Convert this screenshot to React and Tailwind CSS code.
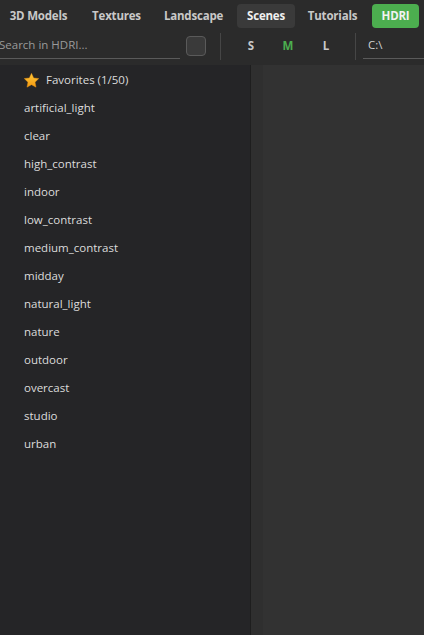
import React from "react";

const tabs = [
  { t: "3D Models", w: "w-[71px]", ml: "ml-[3px]" },
  { t: "Textures", w: "w-[61px]", ml: "ml-[12px]" },
  { t: "Landscape", w: "w-[69px]", ml: "ml-[12px]" },
  { t: "Scenes", w: "w-[58px]", ml: "ml-[9px]", active: true },
  { t: "Tutorials", w: "w-[59px]", ml: "ml-[8px]" },
];
const items = [
  "artificial_light",
  "clear",
  "high_contrast",
  "indoor",
  "low_contrast",
  "medium_contrast",
  "midday",
  "natural_light",
  "nature",
  "outdoor",
  "overcast",
  "studio",
  "urban",
];

function Star() {
  return (
    <svg width="17" height="17" viewBox="0 0 24 24">
      <defs>
        <linearGradient id="sg" x1="0" y1="0" x2="0" y2="1">
          <stop offset="0" stopColor="#ffc83a" />
          <stop offset="1" stopColor="#f39a12" />
        </linearGradient>
      </defs>
      <path
        d="M12 1.8l3.1 6.6 7.2.9-5.3 5 1.4 7.1L12 17.9l-6.4 3.5 1.4-7.1-5.3-5 7.2-.9z"
        fill="url(#sg)"
        stroke="#e8900e"
        strokeWidth="0.6"
        strokeLinejoin="round"
      />
    </svg>
  );
}

export default function App() {
  return (
    <div
      className="w-[424px] h-[635px] flex flex-col bg-[#2b2b2b] text-[#dcdcdc] overflow-hidden"
      style={{ fontFamily: '"Open Sans", "Noto Sans", sans-serif' }}
    >
      <div className="h-[30px] pt-[1px] flex items-center text-[11.5px] font-bold whitespace-nowrap tracking-[-0.2px]">
        {tabs.map((x) => (
          <div
            key={x.t}
            className={
              "h-[24px] flex items-center justify-center rounded-[4px] " +
              x.w +
              " " +
              x.ml +
              " " +
              (x.active ? "bg-[#3a3a3a] text-[#f0f0f0]" : "text-[#c8c8c8]")
            }
          >
            {x.t}
          </div>
        ))}
        <div className="h-[24px] w-[47px] ml-[10px] flex items-center justify-center rounded-[4px] bg-[#4cae4f] text-[#f2f2f2]">
          HDRI
        </div>
      </div>
      <div className="h-[35px] flex items-start text-[11.5px] whitespace-nowrap">
        <div className="w-[181px] h-[29px] pt-[2px] border-b border-[#5a5a5a] flex items-center text-[#9a9a9a] -ml-[1px]">
          Search in HDRI...
        </div>
        <div className="ml-[6px] mt-[6px] w-[20px] h-[20px] rounded-[4px] border border-[#5a5a5a] bg-[#3a3a3a]"></div>
        <div className="ml-[14px] mt-[3px] w-[1px] h-[27px] bg-[#464646]"></div>
        <div className="flex items-center h-[30px] pt-[2px] font-bold ml-[25px]">
          <div className="w-[10px] text-center text-[#c8c8c8]">S</div>
          <div className="w-[14px] ml-[25px] text-center text-[#4cae4f]">M</div>
          <div className="w-[10px] ml-[26px] text-center text-[#c8c8c8]">L</div>
        </div>
        <div className="ml-[24px] mt-[3px] w-[1px] h-[27px] bg-[#464646]"></div>
        <div className="ml-[7px] flex-1 h-[29px] pt-[2px] border-b border-[#5a5a5a] flex items-center pl-[5px] text-[#d0d0d0]">
          C:\
        </div>
      </div>
      <div className="flex-1 flex min-h-0">
        <div className="w-[250px] pt-[1px] bg-[#252527] flex flex-col text-[11.5px] text-[#dcdcdc] whitespace-nowrap">
          <div className="h-[28px] flex items-center pl-[23px] gap-[6px]">
            <Star />
            <span>Favorites (1/50)</span>
          </div>
          {items.map((i) => (
            <div key={i} className="h-[28px] flex items-center pl-[24px]">
              {i}
            </div>
          ))}
        </div>
        <div className="w-[1px] bg-[#1e1e1e]"></div>
        <div className="w-[12px] bg-[#2f2f2f]"></div>
        <div className="flex-1 bg-[#323232]"></div>
      </div>
    </div>
  );
}
